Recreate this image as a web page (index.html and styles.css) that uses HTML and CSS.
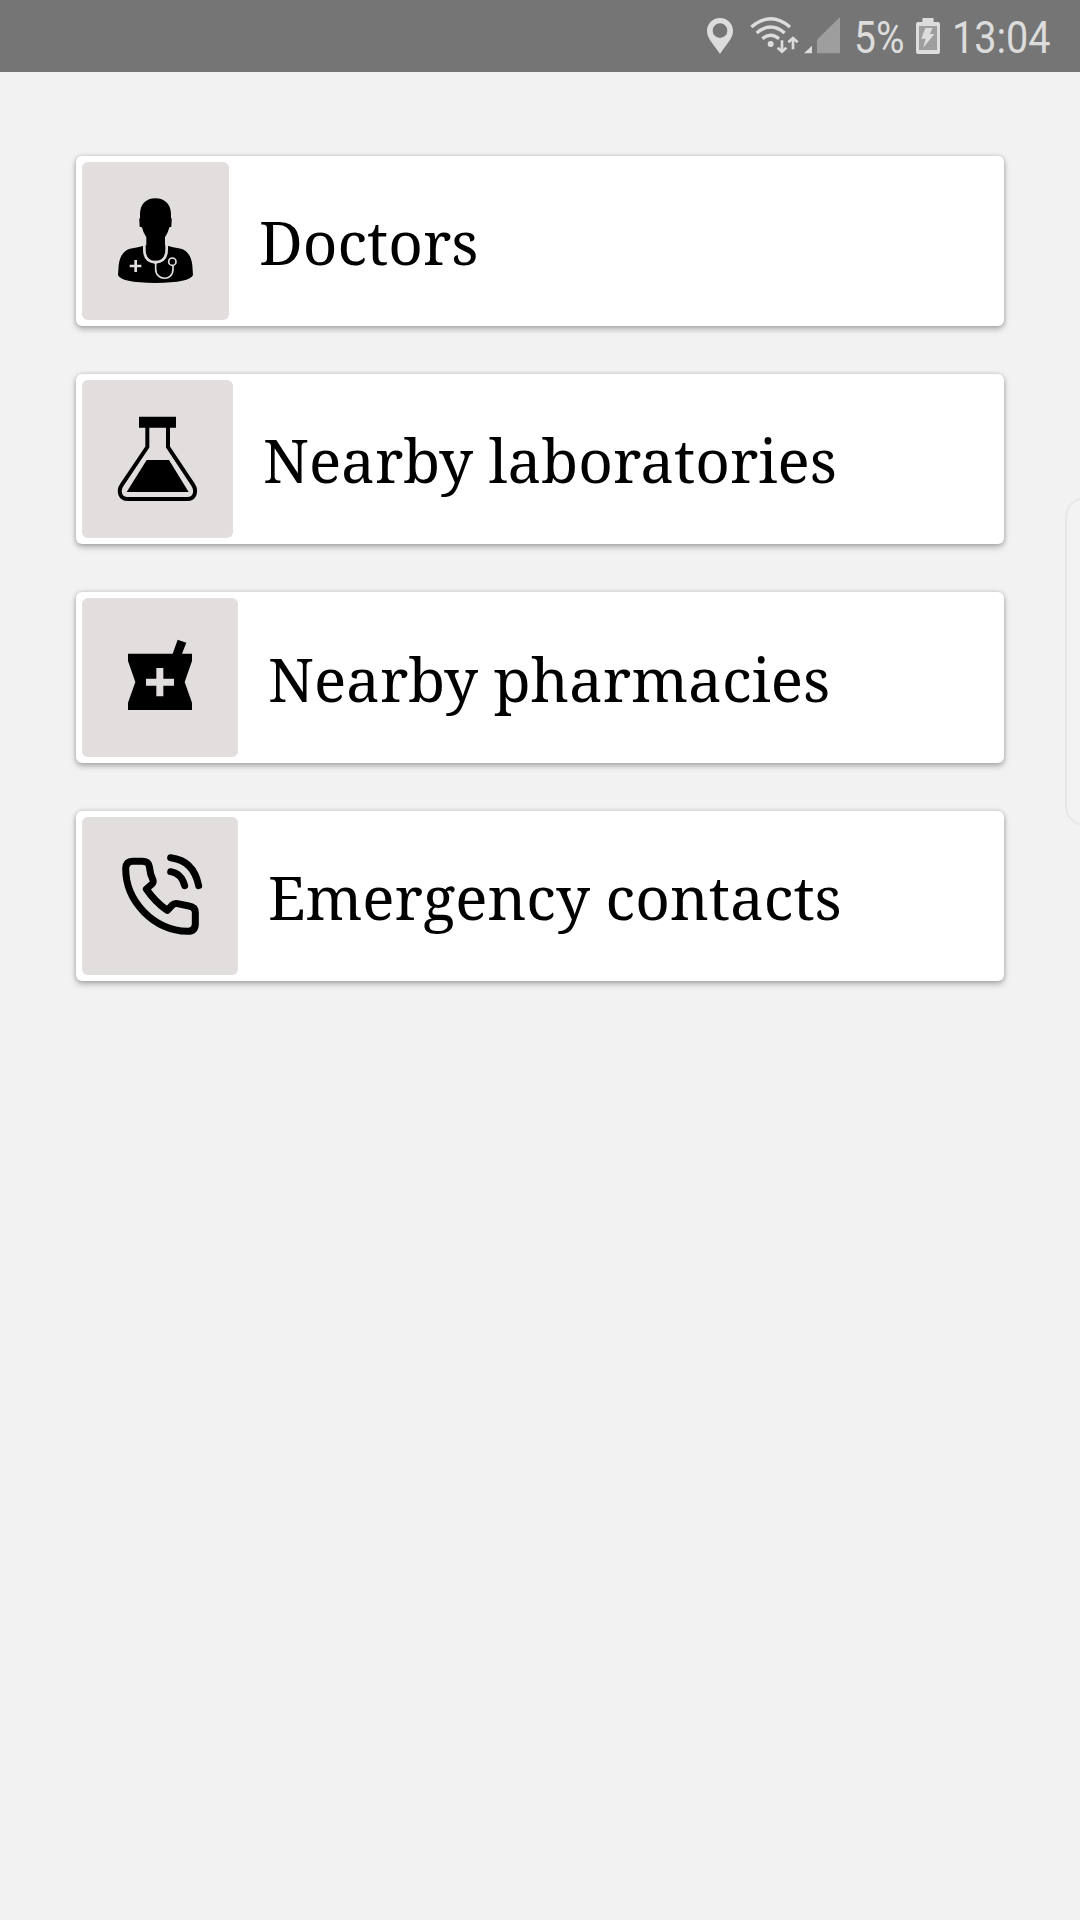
FILE: index.html
```html
<!DOCTYPE html>
<html lang="en">
<head>
<meta charset="utf-8">
<title>Health services</title>
<link rel="stylesheet" href="styles.css">
</head>
<body>
<header class="status-bar">
  <svg class="icon-location" width="26" height="36" viewBox="51 54 78 108"><path fill="#dcdcdc" fill-rule="evenodd" d="M90 54C68 54 51 71 51 93C51 115 69 131 90 162C111 131 129 115 129 93C129 71 112 54 90 54ZM90 70A22 22 0 1 1 90 114A22 22 0 1 1 90 70Z"/></svg>
  <svg class="icon-wifi" width="49" height="37" viewBox="179 50 147 111"><g fill="none" stroke="#dcdcdc" stroke-width="10"><path d="M183 80Q241 31 299 80M199 98Q241 62 283 98M216 115Q241 94 266 115"/><path stroke-width="8" d="M275 120V153M308 147V115"/><path stroke-width="8" d="M262 142L275 154L288 142M294 126L308 113L322 126"/></g><circle cx="241" cy="131" r="9" fill="#dcdcdc"/></svg>
  <svg class="icon-signal" width="36" height="37" viewBox="342 50 108 111"><path fill="#dcdcdc" d="M342 159L366 136V159Z"/><path fill="#9e9e9e" d="M381 159V118L450 50V159Z"/></svg>
  <span class="status-text battery-level">5%</span>
  <svg class="icon-battery" width="24" height="36" viewBox="678 54 72 108"><path fill="#dcdcdc" d="M697 66V58Q697 54 701 54H727Q731 54 731 58V66H744Q750 66 750 72V156Q750 162 744 162H684Q678 162 678 156V72Q678 66 684 66Z"/><path fill="#9e9e9e" d="M687 78H741V150H687Z"/><path fill="#dcdcdc" d="M706 84H728L719 102H733L700 143L707 116H694Z"/></svg>
  <span class="status-text clock">13:04</span>
</header>
<main class="menu">
  <a class="card">
    <span class="tile"><svg width="147" height="158" viewBox="36 51 441 474"><path d="M256 160C228 160 210 178 210 208V219Q207 220 208 226L209 245L216 247Q219 263 229 277V300Q205 308 180 311Q151 319 146 361L144 390Q151 413 256 414Q361 413 369 390L367 361Q362 319 333 311Q308 308 285 300V277Q295 263 298 247L304 245L305 226Q306 220 303 219V208C303 178 284 160 256 160Z"/><g fill="none" stroke="#e2dede"><path stroke-width="8" d="M223 288V314Q223 350 256 352Q290 350 290 314V288"/><path stroke-width="5" d="M257 350V373C257 407 309 410 309 373V360"/><circle cx="307" cy="350" r="11" stroke-width="5"/><path stroke-width="8" d="M179 363H214M197 345V381"/></g><path fill="#e2dede" d="M247 347H266L260 356H254Z"/></svg></span>
    <span class="label">Doctors</span>
  </a>
  <a class="card">
    <span class="tile"><svg width="151" height="158" viewBox="36 45 453 474"><path d="M207 155H318V188H207ZM230 285H297L356 381H170Z"/><path fill="none" stroke="#000" stroke-width="12" d="M232 186V246L156 359C142 380 151 402 173 402H352C374 402 382 380 369 359L294 246V186"/></svg></span>
    <span class="label">Nearby laboratories</span>
  </a>
  <a class="card card-tall">
    <span class="tile"><svg width="156" height="158" viewBox="36 45 468 474"><path fill-rule="evenodd" d="M174 212H308L323 170L349 179L336 212H366V234L344 297L366 359V381H174V359L196 297L174 234ZM259 255V287H228V308H259V340H280V308H312V287H280V255Z"/></svg></span>
    <span class="label">Nearby pharmacies</span>
  </a>
  <a class="card">
    <span class="tile"><svg width="156" height="158" viewBox="36 51 468 474"><g fill="none" stroke="#000" stroke-width="21" stroke-linecap="round" stroke-linejoin="round"><path d="M188 184H217Q235 184 238 199C240 221 243 228 249 240Q251 247 246 252L229 267Q255 306 292 331L307 315Q313 309 322 311L357 318Q376 321 376 338V372Q375 394 353 394C251 391 167 305 167 205Q168 185 188 184Z"/><path d="M302 215Q334 220 344 257M302 173Q371 181 386 257"/></g></svg></span>
    <span class="label">Emergency contacts</span>
  </a>
</main>
<div class="edge-handle"></div>
</body>
</html>
```
FILE: styles.css
```css
body {
  margin: 0;
  position: relative;
  width: 1080px;
  height: 1920px;
  overflow: hidden;
  background: #f2f2f2;
  color: #000;
}

.status-bar {
  display: flex;
  height: 72px;
  box-sizing: border-box;
  padding: 17px 30px 0 707px;
  background: #757575;
}
.status-bar svg { flex: none; display: block; }
.icon-location { margin-top: 1px; }
.icon-wifi { margin-left: 17px; }
.icon-signal { margin-left: 5px; }
.icon-battery { margin: 1px 0 0 15px; }

.status-text {
  flex: none;
  font: 45px/53px Roboto, sans-serif;
  color: #dcdcdc;
  transform-origin: 0 0;
  white-space: nowrap;
  margin-top: -6px;
}
.battery-level { width: 47px; margin-left: 14px; transform: scaleX(.865); }
.clock { width: 98px; margin-left: 12px; transform: scaleX(.88); }

.menu {
  display: flex;
  flex-direction: column;
  gap: 48px;
  padding: 84px 76px 0;
}

.card {
  display: flex;
  align-items: center;
  box-sizing: border-box;
  height: 170px;
  padding: 6px;
  background: #fff;
  border-radius: 6px;
  box-shadow: 0 3px 6px rgba(0, 0, 0, .28), 0 0 4px rgba(0, 0, 0, .16);
}
.card-tall { height: 171px; }
.card-tall .label { padding-top: 3px; }

.tile {
  flex: none;
  align-self: stretch;
  background: #e2dede;
  border-radius: 6px;
}
.tile svg { display: block; }

.label {
  margin-left: 30px;
  font: 60.2px/80px "Noto Serif", "Droid Serif", "DejaVu Serif Condensed", serif;
  white-space: nowrap;
  padding-top: 1px;
}

.edge-handle {
  position: absolute;
  left: 1065px;
  top: 497px;
  width: 40px;
  height: 325px;
  border: 2px solid #e7e7e7;
  border-radius: 20px;
  background: #f3f3f3;
}
```
